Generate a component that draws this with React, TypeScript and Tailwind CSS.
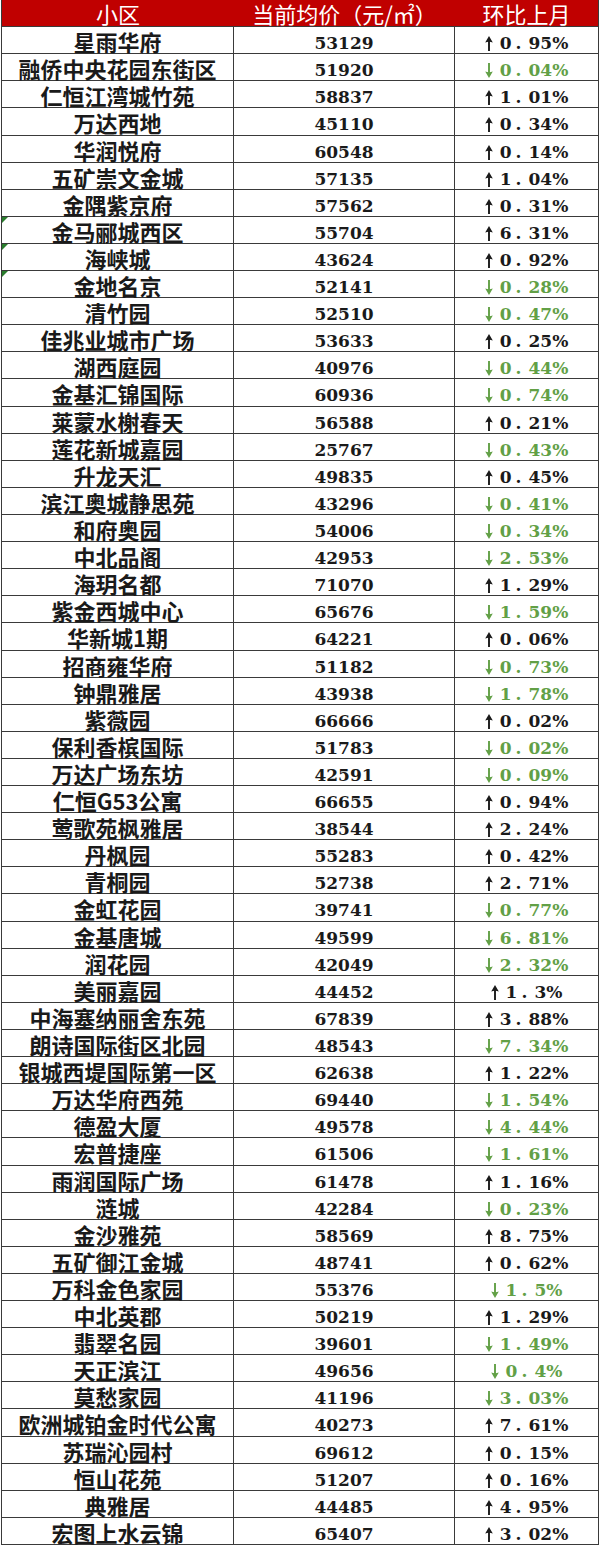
import React from "react";

type Row = [string, string, string, "u" | "d"];

const rows: Row[] = [
  ["星雨华府", "53129", "0.95", "u"],
  ["融侨中央花园东街区", "51920", "0.04", "d"],
  ["仁恒江湾城竹苑", "58837", "1.01", "u"],
  ["万达西地", "45110", "0.34", "u"],
  ["华润悦府", "60548", "0.14", "u"],
  ["五矿崇文金城", "57135", "1.04", "u"],
  ["金隅紫京府", "57562", "0.31", "u"],
  ["金马郦城西区", "55704", "6.31", "u"],
  ["海峡城", "43624", "0.92", "u"],
  ["金地名京", "52141", "0.28", "d"],
  ["清竹园", "52510", "0.47", "d"],
  ["佳兆业城市广场", "53633", "0.25", "u"],
  ["湖西庭园", "40976", "0.44", "d"],
  ["金基汇锦国际", "60936", "0.74", "d"],
  ["莱蒙水榭春天", "56588", "0.21", "u"],
  ["莲花新城嘉园", "25767", "0.43", "d"],
  ["升龙天汇", "49835", "0.45", "u"],
  ["滨江奥城静思苑", "43296", "0.41", "d"],
  ["和府奥园", "54006", "0.34", "d"],
  ["中北品阁", "42953", "2.53", "d"],
  ["海玥名都", "71070", "1.29", "u"],
  ["紫金西城中心", "65676", "1.59", "d"],
  ["华新城1期", "64221", "0.06", "u"],
  ["招商雍华府", "51182", "0.73", "d"],
  ["钟鼎雅居", "43938", "1.78", "d"],
  ["紫薇园", "66666", "0.02", "u"],
  ["保利香槟国际", "51783", "0.02", "d"],
  ["万达广场东坊", "42591", "0.09", "d"],
  ["仁恒G53公寓", "66655", "0.94", "u"],
  ["莺歌苑枫雅居", "38544", "2.24", "u"],
  ["丹枫园", "55283", "0.42", "u"],
  ["青桐园", "52738", "2.71", "u"],
  ["金虹花园", "39741", "0.77", "d"],
  ["金基唐城", "49599", "6.81", "d"],
  ["润花园", "42049", "2.32", "d"],
  ["美丽嘉园", "44452", "1.3", "u"],
  ["中海塞纳丽舍东苑", "67839", "3.88", "u"],
  ["朗诗国际街区北园", "48543", "7.34", "d"],
  ["银城西堤国际第一区", "62638", "1.22", "u"],
  ["万达华府西苑", "69440", "1.54", "d"],
  ["德盈大厦", "49578", "4.44", "d"],
  ["宏普捷座", "61506", "1.61", "d"],
  ["雨润国际广场", "61478", "1.16", "u"],
  ["涟城", "42284", "0.23", "d"],
  ["金沙雅苑", "58569", "8.75", "u"],
  ["五矿御江金城", "48741", "0.62", "u"],
  ["万科金色家园", "55376", "1.5", "d"],
  ["中北英郡", "50219", "1.29", "u"],
  ["翡翠名园", "39601", "1.49", "d"],
  ["天正滨江", "49656", "0.4", "d"],
  ["莫愁家园", "41196", "3.03", "d"],
  ["欧洲城铂金时代公寓", "40273", "7.61", "u"],
  ["苏瑞沁园村", "69612", "0.15", "u"],
  ["恒山花苑", "51207", "0.16", "u"],
  ["典雅居", "44485", "4.95", "u"],
  ["宏图上水云锦", "65407", "3.02", "u"],
];

const flagged = new Set([7, 8, 9]);
const serif = '"DejaVu Serif", "Liberation Serif", serif';
const cjk = '"Noto Sans CJK SC", "Noto Sans", sans-serif';

function Arrow({ dir }: { dir: "u" | "d" }) {
  return (
    <svg width="8" height="15" viewBox="0 0 8 15" className="mt-[1px] mr-[7px] shrink-0">
      {dir === "u" ? (
        <g fill="#1a1a1a">
          <path d="M4 0 L7.8 6.6 L4.9 5.8 L3.1 5.8 L0.2 6.6 Z" />
          <rect x="3.05" y="5" width="1.9" height="10" />
        </g>
      ) : (
        <g fill="#62a046">
          <path d="M4 15 L7.8 8.4 L4.9 9.2 L3.1 9.2 L0.2 8.4 Z" />
          <rect x="3.05" y="0" width="1.9" height="10" />
        </g>
      )}
    </svg>
  );
}

function Pct({ v, dir }: { v: string; dir: "u" | "d" }) {
  const [a, b] = v.split(".");
  return (
    <div
      className={
        "flex items-start justify-center pt-[8px] leading-none text-[17px] font-bold " +
        (dir === "u" ? "text-[#1a1a1a]" : "text-[#62a046]")
      }
      style={{ fontFamily: serif }}
    >
      <Arrow dir={dir} />
      <span>{a}</span>
      <span className="inline-block w-[17px] pl-[4px] text-left">.</span>
      <span>{b}%</span>
    </div>
  );
}

export default function App() {
  return (
    <div className="w-[600px] h-[1545px] bg-white">
      <div className="ml-[1px] w-[598px] h-[1545px] grid grid-rows-[repeat(57,minmax(0,1fr))] border-l border-r border-[#3a3a3a]">
        <div
          className="grid grid-cols-[232px_221px_1fr] bg-[#c00000] text-white text-[22px] leading-[24px] font-normal border-b border-[#3a3a3a] min-h-0"
          style={{ fontFamily: cjk }}
        >
          <div className="flex justify-center items-start pt-[1px]">小区</div>
          <div className="flex justify-center items-start pt-[1px]">当前均价（元/㎡）</div>
          <div className="flex justify-center items-start pt-[1px]">环比上月</div>
        </div>
        {rows.map((r, i) => (
          <div key={i} className="grid grid-cols-[232px_221px_1fr] border-b border-[#3a3a3a] min-h-0">
            <div
              className="relative flex justify-center items-start pt-[2px] border-r border-[#3a3a3a] text-[22px] leading-[24px] font-bold text-[#1a1a1a] whitespace-nowrap"
              style={{ fontFamily: cjk }}
            >
              {flagged.has(i) && (
                <svg width="6" height="6" viewBox="0 0 6 6" className="absolute left-0 top-0">
                  <path d="M0 0 H6 L0 6 Z" fill="#2a7d2e" />
                </svg>
              )}
              {r[0]}
            </div>
            <div
              className="flex justify-center items-start pt-[8px] border-r border-[#3a3a3a] text-[17px] leading-none font-bold text-[#1a1a1a]"
              style={{ fontFamily: serif }}
            >
              {r[1]}
            </div>
            <Pct v={r[2]} dir={r[3]} />
          </div>
        ))}
      </div>
    </div>
  );
}
